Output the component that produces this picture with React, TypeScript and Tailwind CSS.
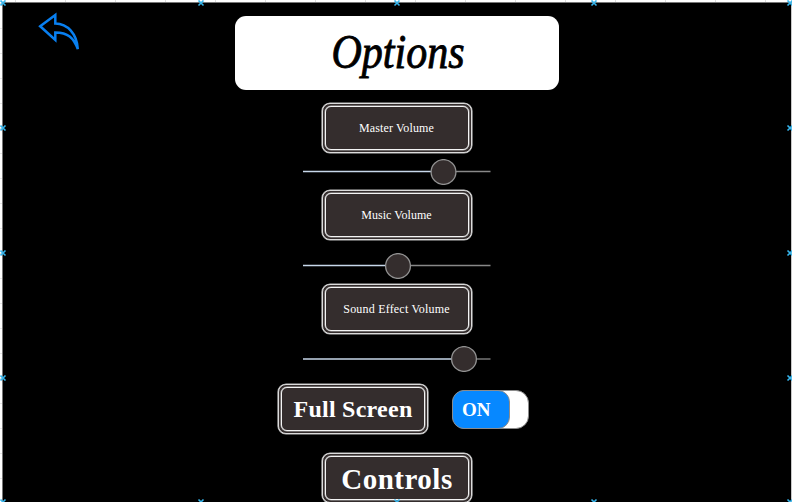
import React from "react";

const serif = "font-['Liberation_Serif',serif]";

function Framed({ children, className = "" }: { children: React.ReactNode; className?: string }) {
  return (
    <div className={`h-[50px] w-[150px] shrink-0 rounded-[8px] border border-[#dcdcdc] bg-[#342d2d] p-[2px] shadow-[0_0_0_0.6px_#bdbdbd] ${className}`}>
      <div className="flex h-full w-full items-center justify-center rounded-[6px] border border-[#f4f4f4] bg-[#342d2d] text-white shadow-[0_0_0_0.5px_#aaaaaa]">
        {children}
      </div>
    </div>
  );
}

function Label({ text, className }: { text: string; className: string }) {
  return <span className={`block shrink-0 whitespace-nowrap ${serif} ${className}`}>{text}</span>;
}

function Slider({ value, lineY = 12.5, className = "" }: { value: number; lineY?: number; className?: string }) {
  return (
    <svg className={`block h-[26px] w-[188px] shrink-0 ${className}`} viewBox="0 0 188 26">
      <path d={`M0 ${lineY}H${value}`} stroke="#c7d7ea" strokeWidth="1.3" />
      <path d={`M${value} ${lineY}H187.5`} stroke="#888888" strokeWidth="1.3" />
      <circle cx={value} cy="13" r="12.4" fill="#342d2d" stroke="#929292" strokeWidth="1.3" />
    </svg>
  );
}

const marks = [
  [3, 3], [201, 3], [397, 3], [594, 3], [790, 3],
  [3, 128], [3, 253], [3, 378], [790, 128], [790, 253], [790, 378],
  [3, 502], [201, 502], [397, 502], [594, 502], [790, 502],
];

export default function App() {
  return (
    <main className="relative h-[502px] w-[792px] overflow-hidden bg-white pl-[2px] pt-[2px]">
      <svg className="absolute left-0 top-0 h-[502px] w-[792px]" viewBox="0 0 792 502">
        {[15, 65, 115, 165, 215, 265, 315, 365, 415, 465, 515, 565, 615, 665, 715, 765].map((x) => (
          <path key={x} d={`M${x + 0.5} 0V2`} stroke="#dddddd" />
        ))}
        {[3, 28, 53, 78, 103, 128, 153, 178, 203, 228, 253, 278, 303, 328, 353, 378, 403, 428, 453, 478].map((y) => (
          <path key={y} d={`M0 ${y + 0.5}H2`} stroke="#e6e6e6" />
        ))}
      </svg>
      <section className="relative flex h-[500px] w-[790px] flex-col items-center border-l border-r border-t border-[#777777] border-r-[#c8c8c8] bg-black">
        <div className="flex h-[87px] w-full shrink-0 items-start justify-between pt-[9px]">
          <svg className="ml-[35px] block h-[42px] w-[42px]" viewBox="0 0 42 42" fill="none" stroke="#087ff0" strokeWidth="2.5">
            <path d="M2.2 14.3L17.3 3V11.4C29.5 11.4 39 22 39.8 37C35.5 25.5 30 20.5 17.3 20.4V28Z" />
          </svg>
          <div className="mr-[232px] mt-[4px] flex h-[74px] w-[324px] items-center justify-center rounded-[11px] bg-white">
            <Label text="Options" className="translate-x-[1px] translate-y-[-1px] scale-x-[0.875] text-[48px] italic leading-[56px] text-black [-webkit-text-stroke:0.9px_black]" />
          </div>
        </div>
        <Framed className="mt-[13px]">
          <Label text="Master Volume" className="-translate-x-[0.5px] text-[12px] leading-[16px] tracking-[0.15px]" />
        </Framed>
        <Slider value={140.5} className="mt-[6px]" />
        <Framed className="mt-[5px]">
          <Label text="Music Volume" className="-translate-x-[0.5px] text-[12px] leading-[16px] tracking-[0.05px]" />
        </Framed>
        <Slider value={95} className="mt-[13px]" />
        <Framed className="mt-[5px]">
          <Label text="Sound Effect Volume" className="-translate-x-[0.5px] text-[12px] leading-[16px] tracking-[0.2px]" />
        </Framed>
        <Slider value={161} lineY={13} className="mt-[12px]" />
        <div className="mt-[12px] flex h-[50px] w-full shrink-0 items-start pl-[275px]">
          <Framed>
            <Label text="Full Screen" className="text-[24px] font-bold leading-[30px] tracking-[0.25px]" />
          </Framed>
          <div className="ml-[24px] mt-[6px] h-[39px] w-[77px] rounded-[13px] border border-[#8b8b8b] bg-white">
            <div className="-ml-px -mt-px flex h-[39px] w-[58px] items-center rounded-[12px] border border-[#8b8b8b] bg-[#0788ff] pl-[9px] text-white">
              <Label text="ON" className="text-[19px] font-bold leading-[24px]" />
            </div>
          </div>
        </div>
        <Framed className="mt-[19px]">
          <Label text="Controls" className="translate-y-px text-[29px] font-bold leading-[32px] tracking-[0.5px]" />
        </Framed>
      </section>
      <svg className="pointer-events-none absolute left-0 top-0 h-[502px] w-[792px]" viewBox="0 0 792 502">
        {marks.map(([x, y]) => (
          <path key={`${x}-${y}`} d={`M${x - 2.5} ${y - 2.5}L${x + 2.5} ${y + 2.5}M${x - 2.5} ${y + 2.5}L${x + 2.5} ${y - 2.5}`} stroke="#36b6ed" strokeWidth="1.6" />
        ))}
      </svg>
    </main>
  );
}
